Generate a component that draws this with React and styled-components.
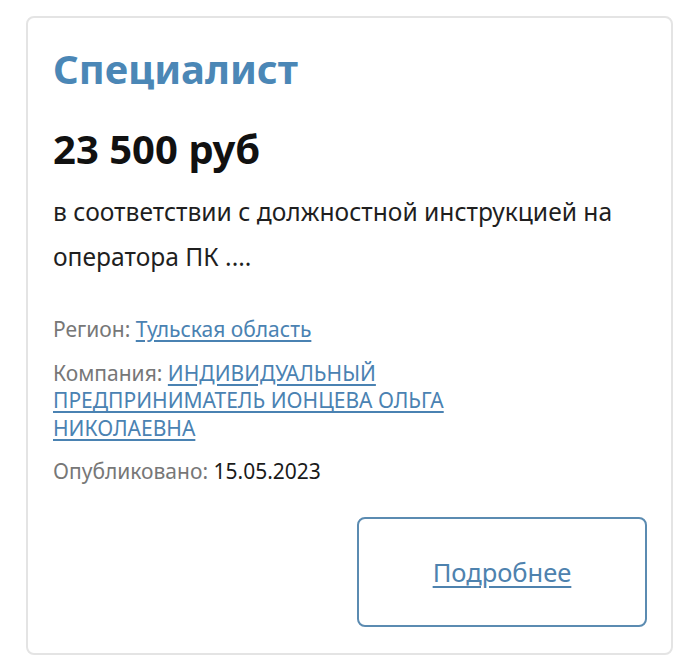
import React from 'react';
import styled, { createGlobalStyle } from 'styled-components';

const GlobalStyle = createGlobalStyle`
  html, body {
    margin: 0;
    padding: 0;
    background: #ffffff;
  }
  body {
    font-family: "Noto Sans", "Open Sans", sans-serif;
    color: #1a1a1a;
  }
`;

const Page = styled.div`
  padding: 16px 27px 16px 26px;
`;

const Card = styled.article`
  width: 647px;
  box-sizing: border-box;
  border: 2px solid #e4e4e4;
  border-radius: 8px;
  padding: 27px 24px 26px 25px;
  display: flex;
  flex-direction: column;
`;

const Title = styled.h2`
  margin: 0;
  font-size: 40px;
  line-height: 48px;
  font-weight: 700;
  color: #4b87b6;
`;

const Salary = styled.div`
  margin-top: 32px;
  font-size: 40px;
  line-height: 48px;
  font-weight: 700;
  color: #111;
`;

const Description = styled.p`
  margin: 16px 0 0;
  font-size: 24.6px;
  line-height: 45px;
  color: #1f1f1f;
`;

const Meta = styled.div`
  margin-top: 37px;
  max-width: 470px;
  display: flex;
  flex-direction: column;
  gap: 16px;
`;

const MetaRow = styled.div`
  font-size: 21px;
  line-height: 27.5px;
  color: #777;
`;

const MetaLink = styled.a`
  color: #4a82b2;
  text-decoration: underline;
  text-underline-offset: 3px;
`;

const MetaValue = styled.span`
  color: #1a1a1a;
`;

const Actions = styled.div`
  margin-top: 31px;
  display: flex;
  justify-content: flex-end;
`;

const MoreButton = styled.a`
  width: 290px;
  height: 110px;
  box-sizing: border-box;
  border: 2px solid #5b8bb1;
  border-radius: 8px;
  display: flex;
  align-items: center;
  justify-content: center;
  font-size: 25.5px;
  color: #4e82ae;
  text-decoration: underline;
  text-underline-offset: 4px;
  cursor: pointer;
`;

export default function App() {
  return (
    <Page>
      <GlobalStyle />
      <Card>
        <Title>Специалист</Title>
        <Salary>23 500 руб</Salary>
        <Description>
          в соответствии с должностной инструкцией на оператора ПК ....
        </Description>
        <Meta>
          <MetaRow>
            Регион: <MetaLink href="#">Тульская область</MetaLink>
          </MetaRow>
          <MetaRow>
            Компания:{' '}
            <MetaLink href="#">
              ИНДИВИДУАЛЬНЫЙ ПРЕДПРИНИМАТЕЛЬ ИОНЦЕВА ОЛЬГА НИКОЛАЕВНА
            </MetaLink>
          </MetaRow>
          <MetaRow>
            Опубликовано: <MetaValue>15.05.2023</MetaValue>
          </MetaRow>
        </Meta>
        <Actions>
          <MoreButton href="#">Подробнее</MoreButton>
        </Actions>
      </Card>
    </Page>
  );
}
